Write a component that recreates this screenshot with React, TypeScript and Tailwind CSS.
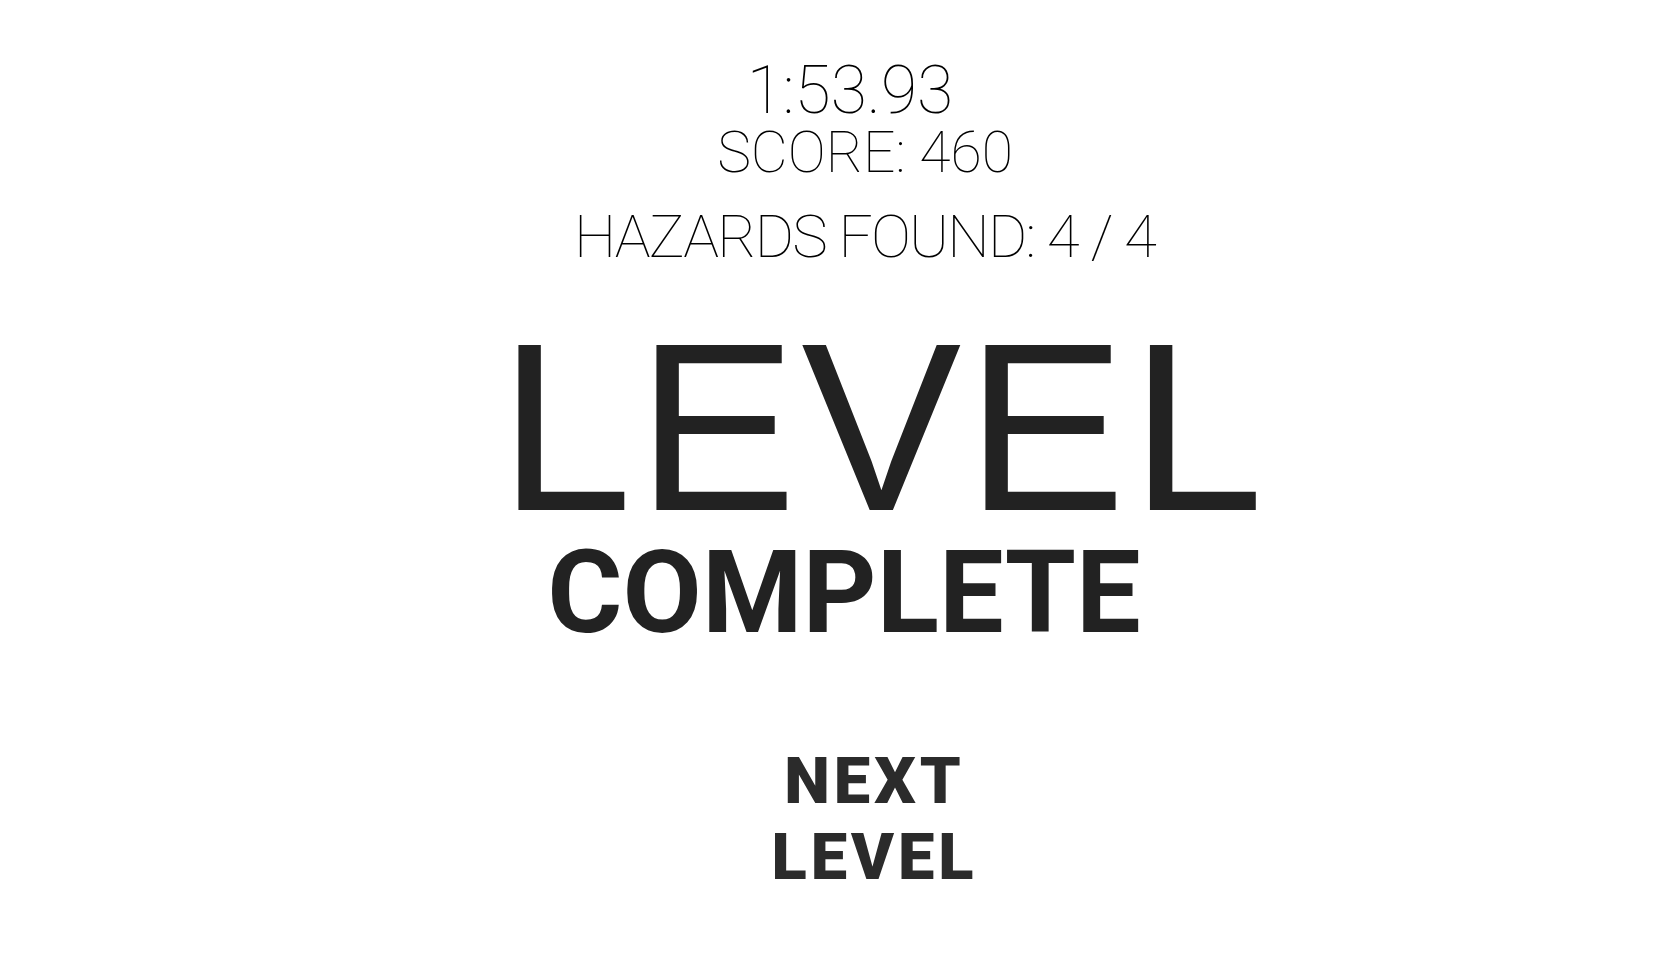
const App = () => {
    return (
        <div className="min-h-screen w-full bg-white flex flex-col items-center font-['Roboto',sans-serif]">
            <div className="mt-[58px] ml-[39px] text-[66px] leading-none font-thin text-black">
                1:53.93
            </div>
            <div className="ml-[69px] text-[57px] leading-none font-thin text-black">
                SCORE: 460
            </div>
            <div className="mt-[26px] ml-[68px] text-[60px] leading-none font-thin tracking-[-1.8px] text-black">
                HAZARDS FOUND: 4 / 4
            </div>
            <div className="mt-[40px] ml-[106px] text-[240px] leading-none font-normal tracking-[4.5px] text-[#222222] font-['Liberation_Sans',sans-serif]">
                LEVEL
            </div>
            <div className="-mt-[12px] ml-[27px] text-[115px] leading-none font-bold text-[#222222]">
                COMPLETE
            </div>
            <button className="mt-[93px] ml-[88px] text-[65px] leading-[76px] font-black tracking-[4px] text-[#2b2b2b] text-center">
                NEXT
                <br />
                LEVEL
            </button>
        </div>
    );
};

export default App;
